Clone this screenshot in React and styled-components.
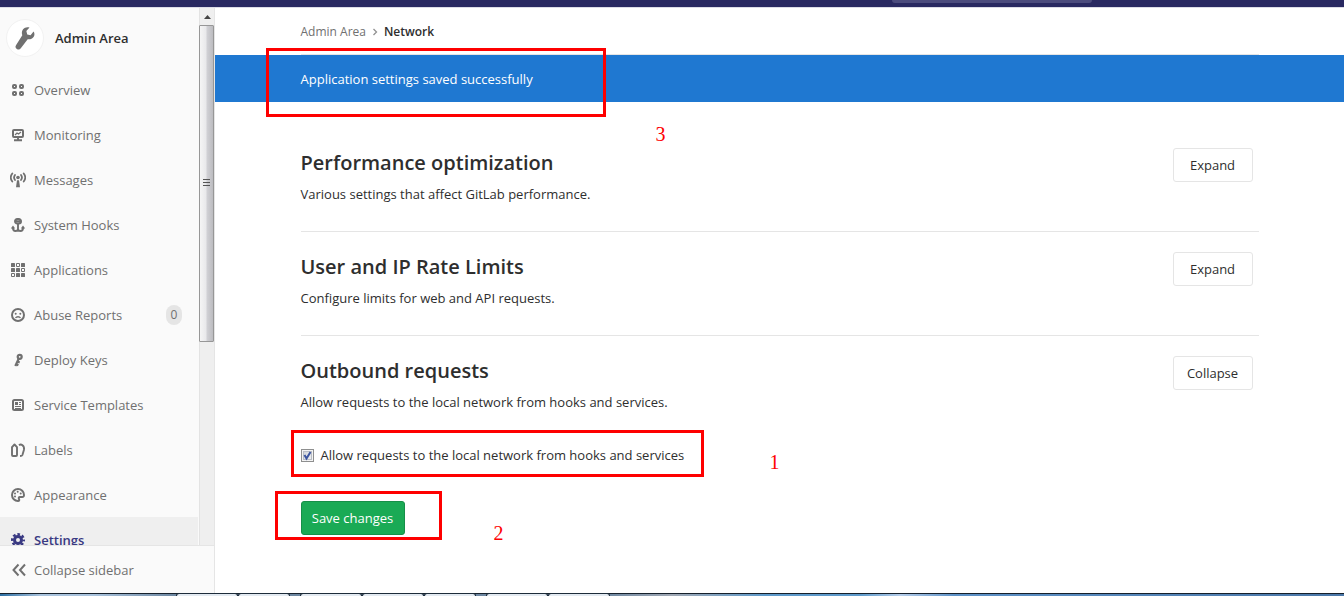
import React, { useState } from 'react'
import styled, { createGlobalStyle, css } from 'styled-components'

const GlobalStyle = createGlobalStyle`
  * {
    box-sizing: border-box;
  }

  body {
    margin: 0;
    background: #fff;
    color: #2e2e2e;
    font-family: 'Open Sans', 'Noto Sans', sans-serif;
    font-size: 13px;
    line-height: 20px;
  }

  button, input {
    font: inherit;
  }
`

const Page = styled.div`
  display: flex;
  flex-direction: column;
  height: 100vh;
  overflow: hidden;
`

const Navbar = styled.header`
  display: flex;
  justify-content: flex-end;
  align-items: flex-start;
  flex: none;
  height: 8px;
  padding-right: 252px;
  background: #292961;
  border-bottom: 1px solid #dcdce6;
`

const Search = styled.input`
  width: 200px;
  height: 3px;
  padding: 0;
  border: 0;
  border-radius: 0 0 4px 4px;
  background: #4c4c7d;
`

const Body = styled.div`
  display: flex;
  flex: 1;
  min-height: 0;
`

const Sidebar = styled.aside`
  display: flex;
  flex-direction: column;
  flex: none;
  width: 215px;
  background: #fafafa;
  border-right: 1px solid #e5e5e5;
`

const SidebarScroll = styled.div`
  display: flex;
  flex: 1;
  min-height: 0;
  overflow: hidden;
`

const SidebarContent = styled.div`
  flex: 1;
  padding-right: 1px;
`

const ContextHeader = styled.a`
  display: flex;
  align-items: center;
  gap: 11px;
  height: 59px;
  padding-left: 6px;
  color: #2e2e2e;
  font-weight: 600;
  text-decoration: none;
`

const Avatar = styled.span`
  display: flex;
  align-items: center;
  justify-content: center;
  width: 38px;
  height: 38px;
  border: 1px solid #f2f2f2;
  border-radius: 50%;
  background: #fff;
  color: #707070;
`

const NavList = styled.ul`
  margin: 0;
  padding: 0;
  list-style: none;
`

const navEntry = css`
  display: flex;
  align-items: center;
  gap: 8px;
  padding: 0 16px 0 10px;
  color: #707070;
`

const NavLink = styled.a`
  ${navEntry}
  height: 45px;
  text-decoration: none;

  ${props => props.$active && css`
    background: #efefef;
    color: #393982;
    font-weight: 600;
  `}
`

const Badge = styled.span`
  min-width: 16px;
  margin-left: auto;
  padding: 0 4px;
  border-radius: 10px;
  background: #e5e5e5;
  font-size: 12px;
  text-align: center;
`

const CollapseButton = styled.button`
  ${navEntry}
  flex: none;
  height: 48px;
  border: 0;
  border-top: 1px solid #e5e5e5;
  background: #fafafa;
  cursor: pointer;
`

const Scrollbar = styled.div`
  display: flex;
  flex-direction: column;
  flex: none;
  width: 15px;
  background: #efefef;
  border-left: 1px solid #e3e3e3;
`

const ScrollArrow = styled.div`
  display: flex;
  align-items: center;
  justify-content: center;
  flex: none;
  height: 17px;
`

const ScrollThumb = styled.div`
  display: flex;
  align-items: center;
  justify-content: center;
  height: 59%;
  margin-left: -1px;
  border: 1px solid #979797;
  border-radius: 1px;
  background: linear-gradient(to right, #f5f5f5, #e9e9eb 45%, #d0d0d4 55%, #bcbcc0);
`

const Icon = styled.svg`
  flex: none;
  width: ${props => props.$size || 16}px;
  height: ${props => props.$size || 16}px;
`

const Main = styled.main`
  flex: 1;
  min-width: 0;
  overflow: hidden;
`

const Container = styled.div`
  max-width: 990px;
  margin: 0 auto;
  padding: 0 16px;
`

const Breadcrumbs = styled.nav`
  display: flex;
  align-items: center;
  gap: 6px;
  height: 47px;
  padding-top: 1px;
  border-bottom: 1px solid #e5e5e5;
  font-size: 12px;

  a {
    color: #707070;
    text-decoration: none;
  }

  strong {
    font-weight: 600;
  }
`

const Flash = styled.div`
  margin-bottom: 26px;
  background: #1f78d1;
  color: #fff;
`

const FlashText = styled.div`
  position: relative;
  padding: 14px 0 13px;
`

const Section = styled.section`
  padding: 20px 0 27px;

  & + & {
    border-top: 1px solid #e5e5e5;
  }
`

const SectionHeader = styled.div`
  display: flex;
  justify-content: space-between;
  align-items: flex-start;
  padding-right: 6px;
`

const Title = styled.h4`
  margin: 0 0 6px;
  font-size: 20px;
  font-weight: 600;
  line-height: 30px;
`

const Text = styled.p`
  margin: 0;
`

const Button = styled.button`
  min-width: ${props => props.$primary ? 104 : 80}px;
  height: 34px;
  padding: 0 9px;
  border: 1px solid ${props => props.$primary ? '#168f48' : '#e5e5e5'};
  border-radius: 3px;
  background: ${props => props.$primary ? '#1aaa55' : '#fff'};
  color: ${props => props.$primary ? '#fff' : '#2e2e2e'};
  cursor: pointer;
`

const Form = styled.form`
  display: flex;
  flex-direction: column;
  align-items: flex-start;
  gap: 36px;
  padding-top: 33px;
`

const Field = styled.div`
  position: relative;
`

const CheckLabel = styled.label`
  display: flex;
  align-items: center;
  gap: 7px;
`

const CheckWrap = styled.span`
  position: relative;
  display: flex;

  svg {
    position: absolute;
    top: 0;
    left: 0;
    pointer-events: none;
  }
`

const Checkbox = styled.input`
  appearance: none;
  width: 13px;
  height: 13px;
  margin: 0;
  border: 1px solid #8e8f8f;
  background: linear-gradient(135deg, #cbcfd5, #f6f6f6);
  box-shadow: inset 0 0 0 1px #f4f4f4, inset 0 0 0 2px #b9bec6;
`

/* red frame drawn over the step it points at */
const Frame = styled.div`
  position: absolute;
  top: ${props => props.$top}px;
  left: ${props => props.$left}px;
  width: ${props => props.$width}px;
  height: ${props => props.$height}px;
  border: 3px solid #fe0000;
  pointer-events: none;
`

const Step = styled.span`
  position: absolute;
  top: ${props => props.$top}px;
  left: ${props => props.$left}px;
  color: #fe0000;
  font-family: 'Liberation Serif', serif;
  font-size: 20px;
`

const Taskbar = styled.div`
  display: flex;
  flex: none;
  height: 3px;
  padding-left: 177px;
  border-top: 1px solid #16202b;
  background: linear-gradient(to right, #2b6ea3, #a9c3dd 3%, #a9c3dd 7%, #6d87a1 13%, #6d87a1 45%, #a0a8b4 50%, #5d9acb 57%, #5d9acb 64%, #b5cdea 67%, #5d92c8 71%, #4a77a8);
`

const TaskButton = styled.div`
  width: ${props => props.$narrow ? 50 : 60}px;
  margin-right: ${props => props.$narrow ? 12 : 2}px;
  border-radius: 2px 2px 0 0;
  background: #e3eaf1;
  box-shadow: 0 0 0 1px #1d2c3a;
`

const icons = {
  overview: (
    <g fill="none" stroke="currentColor" strokeWidth="2">
      <rect x="3" y="3" width="3" height="3" rx="1" />
      <rect x="10" y="3" width="3" height="3" rx="1" />
      <rect x="3" y="10" width="3" height="3" rx="1" />
      <rect x="10" y="10" width="3" height="3" rx="1" />
    </g>
  ),
  monitor: (
    <g fill="none" stroke="currentColor">
      <rect x="3" y="3" width="10" height="7" rx="1" strokeWidth="2" />
      <path d="M5 8l2-2 1.500 1L11 5" strokeWidth="1.200" />
      <path d="M8 10v3M4 13.200h8" strokeWidth="1.900" />
    </g>
  ),
  messages: (
    <g fill="none" stroke="currentColor" strokeWidth="1.800" strokeLinecap="round">
      <path d="M2.300 1.500C.3 4 .3 7 2.300 9.500M13.700 1.500c2 2.500 2 5.500 0 8M5 3C3.800 4.700 3.800 6.500 5 8M11 3c1.200 1.700 1.200 3.500 0 5" />
      <circle cx="8" cy="5.500" r="1.800" fill="currentColor" stroke="none" />
      <path d="M7 8.300h2l1 7H6z" fill="currentColor" stroke="none" />
    </g>
  ),
  hook: (
    <g fill="none" stroke="currentColor" strokeWidth="1.900">
      <path d="M5 4.200A2.200 2.200 0 0 1 7.200 2h1.600a2.200 2.200 0 0 1 0 4.500H7.200A2.200 2.200 0 0 1 5 4.200zM5 4.200h6" />
      <path d="M8 7v7" />
      <path d="M3 10.500v.8C3 13 4 14 5.500 14S8 13 8 12c0 1 1 2 2.500 2s2.500-1 2.500-2.700v-.8" />
      <path d="M.8 11.600L3 8.600l2.200 3zM10.800 11.600l2.200-3 2.200 3z" fill="currentColor" stroke="none" />
    </g>
  ),
  applications: (
    <g fill="currentColor">
      <rect x="1" y="1" width="4" height="4" rx=".6" />
      <rect x="11" y="1" width="4" height="4" rx=".6" />
      <rect x="1" y="6" width="4" height="4" rx=".6" />
      <rect x="6" y="6" width="4" height="4" rx=".6" />
      <rect x="6" y="11" width="4" height="4" rx=".6" />
      <rect x="11" y="11" width="4" height="4" rx=".6" />
      <path d="M6.500 1.500h3v3h-3zM11.500 6.500h3v3h-3zM1.500 11.500h3v3h-3z" fill="none" stroke="currentColor" />
    </g>
  ),
  abuse: (
    <g fill="none" stroke="currentColor">
      <circle cx="8" cy="8" r="6" strokeWidth="2" />
      <path d="M5.500 11c1-1.700 4-1.700 5 0" strokeWidth="1.300" />
      <circle cx="5.700" cy="6.700" r="1" fill="currentColor" stroke="none" />
      <circle cx="10.300" cy="6.700" r="1" fill="currentColor" stroke="none" />
    </g>
  ),
  key: (
    <g fill="none" stroke="currentColor" strokeWidth="2.200">
      <circle cx="9.700" cy="4.800" r="2" />
      <path d="M8.800 6.500L5.300 14M7.300 9.500l2.400 1.100M6 12.200l2.400 1.100" />
    </g>
  ),
  template: (
    <g fill="none" stroke="currentColor">
      <rect x="3" y="3" width="10" height="10" rx="1.500" strokeWidth="2" />
      <path d="M5 9.500h6M5 11.500h6M9 5.500h2M9 7.500h2" strokeWidth="1" />
      <path d="M5 5h3v3H5z" fill="currentColor" stroke="none" />
    </g>
  ),
  labels: (
    <g fill="none" stroke="currentColor" strokeWidth="1.900" strokeLinejoin="round">
      <path d="M2 5.200L4.500 2.500 7 5.200V13a1 1 0 0 1-1 1H3a1 1 0 0 1-1-1z" />
      <path d="M9 3.300c1-.9 2.500-.8 3.500 0 1.500 1.200 1.800 2.900 1.400 4.700l-1.500 5c-.3.800-1 1-2.400 1" />
    </g>
  ),
  appearance: (
    <g fill="none" stroke="currentColor">
      <path d="M8 14A6 6 0 1 1 14 8c0 1.800-1 2.300-2.500 2H10c-1.300 0-1.500 1-1 2s.3 2-1 2z" strokeWidth="2" />
      <g fill="currentColor" stroke="none">
        <circle cx="5" cy="9.500" r="1" />
        <circle cx="5" cy="6.500" r="1" />
        <circle cx="7.700" cy="4.800" r="1" />
        <circle cx="10.700" cy="6.500" r="1" />
      </g>
    </g>
  ),
  settings: (
    <g fill="none" stroke="currentColor">
      <circle cx="8" cy="8" r="3.500" strokeWidth="3" />
      <circle cx="8" cy="8" r="5.800" strokeWidth="2.400" strokeDasharray="2.600 1.955" strokeDashoffset="1.300" />
    </g>
  ),
  collapse: (
    <path d="M8.500 2.500L3.500 8l5 5.500M15 2.500L10 8l5 5.500" fill="none" stroke="currentColor" strokeWidth="2" />
  ),
  wrench: (
    <path d="M13.700 3.700l-2 2.400-2.200-.5-.6-2.300L11 1C9.400.5 7.700.9 6.700 2.200c-.9 1.200-1 2.600-.5 4L2.100 12.600a1.900 1.900 0 0 0 3.100 2.200l4.600-6c1.500.3 3-.2 3.900-1.500.8-1.100.8-2.500 0-3.600z" fill="currentColor" />
  )
}

const navItems = [
  { name: 'Overview', icon: 'overview' },
  { name: 'Monitoring', icon: 'monitor' },
  { name: 'Messages', icon: 'messages' },
  { name: 'System Hooks', icon: 'hook' },
  { name: 'Applications', icon: 'applications' },
  { name: 'Abuse Reports', icon: 'abuse', count: 0 },
  { name: 'Deploy Keys', icon: 'key' },
  { name: 'Service Templates', icon: 'template' },
  { name: 'Labels', icon: 'labels' },
  { name: 'Appearance', icon: 'appearance' },
  { name: 'Settings', icon: 'settings', active: true }
]

const SvgIcon = ({ name, size }) => (
  <Icon viewBox="0 0 16 16" $size={size} aria-hidden="true">{icons[name]}</Icon>
)

const SettingsSection = ({ title, text, action, children }) => (
  <Section>
    <SectionHeader>
      <div>
        <Title>{title}</Title>
        <Text>{text}</Text>
      </div>
      <Button type="button">{action}</Button>
    </SectionHeader>
    {children}
  </Section>
)

function App() {
  const [allowLocal, setAllowLocal] = useState(true)

  return (
    <Page>
      <GlobalStyle />
      <Navbar>
        <Search type="text" aria-label="Search" />
      </Navbar>
      <Body>
        <Sidebar>
          <SidebarScroll>
            <SidebarContent>
              <ContextHeader href="#admin">
                <Avatar><SvgIcon name="wrench" size={24} /></Avatar>
                Admin Area
              </ContextHeader>
              <NavList>
                {navItems.map(item => (
                  <li key={item.name}>
                    <NavLink href="#" $active={item.active}>
                      <SvgIcon name={item.icon} />
                      {item.name}
                      {item.count !== undefined && <Badge>{item.count}</Badge>}
                    </NavLink>
                  </li>
                ))}
              </NavList>
            </SidebarContent>
            <Scrollbar aria-hidden="true">
              <ScrollArrow>
                <svg width="7" height="4"><path d="M0 4l3.500-4L7 4z" fill="#444" /></svg>
              </ScrollArrow>
              <ScrollThumb>
                <svg width="7" height="8"><path d="M0 .5h7M0 3.500h7M0 6.500h7" stroke="#555" /></svg>
              </ScrollThumb>
            </Scrollbar>
          </SidebarScroll>
          <CollapseButton type="button">
            <SvgIcon name="collapse" />
            Collapse sidebar
          </CollapseButton>
        </Sidebar>
        <Main>
          <Container>
            <Breadcrumbs aria-label="Breadcrumb">
              <a href="#admin">Admin Area</a>
              <svg width="6" height="8" aria-hidden="true">
                <path d="M1.500 1l3 3-3 3" fill="none" stroke="#919191" strokeWidth="1.300" />
              </svg>
              <strong>Network</strong>
            </Breadcrumbs>
          </Container>
          <Flash role="status">
            <Container>
              <FlashText>
                Application settings saved successfully
                <Frame $top={-7} $left={-35} $width={340} $height={69} />
                <Step $top={69} $left={355}>3</Step>
              </FlashText>
            </Container>
          </Flash>
          <Container>
            <SettingsSection
              title="Performance optimization"
              text="Various settings that affect GitLab performance."
              action="Expand"
            />
            <SettingsSection
              title="User and IP Rate Limits"
              text="Configure limits for web and API requests."
              action="Expand"
            />
            <SettingsSection
              title="Outbound requests"
              text="Allow requests to the local network from hooks and services."
              action="Collapse"
            >
              <Form onSubmit={e => e.preventDefault()}>
                <Field>
                  <CheckLabel htmlFor="allow-local">
                    <CheckWrap>
                      <Checkbox
                        id="allow-local"
                        type="checkbox"
                        checked={allowLocal}
                        onChange={e => setAllowLocal(e.target.checked)}
                      />
                      {allowLocal && (
                        <svg width="13" height="13" aria-hidden="true">
                          <path d="M3.500 6l2 3.500L9.500 3" fill="none" stroke="#3c55a0" strokeWidth="2" />
                        </svg>
                      )}
                    </CheckWrap>
                    Allow requests to the local network from hooks and services
                  </CheckLabel>
                  <Frame $top={-15} $left={-10} $width={413} $height={47} />
                  <Step $top={7} $left={469}>1</Step>
                </Field>
                <Field>
                  <Button type="submit" $primary>Save changes</Button>
                  <Frame $top={-10} $left={-26} $width={167} $height={49} />
                  <Step $top={22} $left={193}>2</Step>
                </Field>
              </Form>
            </SettingsSection>
          </Container>
        </Main>
      </Body>
      <Taskbar>
        <TaskButton />
        <TaskButton $narrow />
        <TaskButton />
        <TaskButton />
        <TaskButton $narrow />
        <TaskButton />
        <TaskButton />
      </Taskbar>
    </Page>
  )
}

export default App
